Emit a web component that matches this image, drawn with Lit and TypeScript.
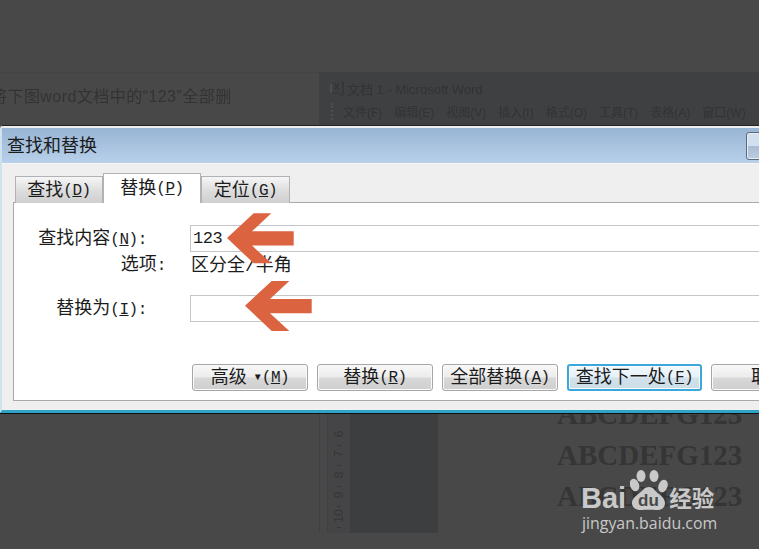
import { LitElement, html, css, svg } from 'lit';
import { customElement } from 'lit/decorators.js';

const MENUS = ['文件(F)', '编辑(E)', '视图(V)', '插入(I)', '格式(O)', '工具(T)', '表格(A)', '窗口(W)'];
const RULER = ['6', '7', '8', '9', '10'];

@customElement('word-backdrop')
export class WordBackdrop extends LitElement {
  static styles = css`
    :host {
      display: flex;
      height: 461px;
      padding-top: 72px;
      font-family: 'Liberation Sans', 'Noto Sans CJK SC', sans-serif;
      color: #333;
    }
    .lead {
      width: 319px;
      flex: none;
      overflow: hidden;
      border-top: 1px solid #444;
      box-sizing: border-box;
      height: 40px;
    }
    .lead p {
      margin: 13px 0 0 -9px;
      font-size: 16px;
      line-height: 22px;
      letter-spacing: 0.45px;
      white-space: nowrap;
      filter: blur(0.4px);
    }
    .word {
      flex: 1;
      display: flex;
      flex-direction: column;
      border-left: 1px solid #404040;
    }
    .head {
      height: 53px;
      background: #3e4042;
      flex: none;
      filter: blur(0.4px);
    }
    .title {
      display: flex;
      align-items: center;
      padding: 7px 0 0 10px;
      font-size: 13px;
      height: 18px;
    }
    .title svg {
      width: 14px;
      height: 16px;
      margin-right: 3px;
    }
    .menu {
      display: flex;
      gap: 12px;
      margin: 6px 0 0 11px;
      padding-left: 10px;
      border-left: 2px dotted #4c4e50;
      font-size: 12px;
      white-space: nowrap;
    }
    .work {
      flex: 1;
      display: flex;
    }
    .gutter {
      width: 7px;
      border-right: 1px solid #404040;
    }
    .ruler {
      width: 22px;
      background: #454547;
      display: flex;
      flex-direction: column;
      justify-content: flex-end;
      align-items: center;
      padding-bottom: 3px;
      font-size: 12px;
      color: #363636;
      filter: blur(0.4px);
    }
    .cell {
      height: 20.5px;
      display: flex;
      flex-direction: column;
      align-items: center;
    }
    .cell span {
      height: 12px;
      line-height: 12px;
      transform: rotate(-90deg);
    }
    .cell i {
      width: 4px;
      height: 1px;
      margin-top: 5px;
      background: #363636;
    }
    .pane {
      width: 88px;
      background: #3d3e40;
    }
    .page {
      flex: 1;
      display: flex;
      flex-direction: column;
      justify-content: flex-end;
      padding: 0 0 16px 119px;
      font: bold 29px/41px 'Liberation Serif', serif;
      color: #353535;
      white-space: nowrap;
    }
  `;

  render() {
    return html`
      <div class="lead"><p>将下图word文档中的“123”全部删</p></div>
      <div class="word">
        <div class="head">
          <div class="title">
            <svg viewBox="0 0 14 16" fill="none" stroke="#555a60" stroke-width="1.2">
              <path d="M1 13h9M11 2h2v13h-3M4 3l5 7M9 3l-5 7" stroke="#333"></path>
              <path d="M1 4v9"></path>
            </svg>
            <span>文档 1 - Microsoft Word</span>
          </div>
          <div class="menu">${MENUS.map((m) => html`<span>${m}</span>`)}</div>
        </div>
        <div class="work">
          <div class="gutter"></div>
          <div class="ruler">${RULER.map((n) => html`<div class="cell"><span>${n}</span><i></i></div>`)}</div>
          <div class="pane"></div>
          <div class="page">
            <div>ABCDEFG123</div>
            <div>ABCDEFG123</div>
            <div>ABCDEFG123</div>
          </div>
        </div>
      </div>
    `;
  }
}

@customElement('find-dialog')
export class FindDialog extends LitElement {
  static styles = css`
    :host {
      display: block;
      width: 800px;
      box-sizing: border-box;
      background: #efefef;
      border-top: 1px solid #222;
      border-left: 2px solid #cfe3ef;
      border-bottom: 3px solid #2fa3c8;
      border-top-left-radius: 4px;
      box-shadow: 0 1px #111;
      font-family: 'Liberation Mono', 'Noto Sans CJK SC', monospace;
      color: #1c1c1c;
      font-size: 18px;
      line-height: 20px;
    }
    .lat {
      font-size: 16px;
      letter-spacing: -0.4px;
    }
    .caption {
      margin-top: 2px;
      background: linear-gradient(#98b5d4, #b8d0ea);
      border-bottom: 1px solid #f6f6f6;
      display: flex;
      align-items: center;
      padding: 3px 0 0 5px;
      height: 32px;
      font-size: 18px;
      position: relative;
    }
    .close {
      position: absolute;
      left: 744px;
      top: 4px;
      width: 40px;
      height: 26px;
      border: 1px solid #5c6a7c;
      border-radius: 3px;
      box-shadow: inset 0 0 0 1px #e4edf6;
      background: linear-gradient(#d2dfee 0 48%, #a9bcd3 52%, #bccde2);
    }
    .tabs {
      display: flex;
      align-items: flex-end;
      padding: 9px 0 0 13px;
      margin-bottom: -1px;
    }
    .tab {
      height: 27px;
      box-sizing: border-box;
      display: flex;
      align-items: center;
      justify-content: center;
      padding-top: 1px;
      white-space: nowrap;
      border: 1.5px solid #b2b2b6;
      border-bottom: none;
      background: linear-gradient(#f6f6f6, #dcdcdc 55%, #cfcfcf);
    }
    .tab.wide {
      width: 88px;
    }
    .tab.narrow {
      width: 89px;
    }
    .tab.active {
      width: 98px;
      height: 30px;
      padding: 0;
      background: #fff;
      position: relative;
      z-index: 1;
    }
    .panel {
      margin: 0 0 0 11px;
      background: #fff;
      border: 1.5px solid #a9a9ad;
      border-right: none;
      padding: 22px 0 9px;
    }
    .row {
      display: grid;
      grid-template-columns: 176px 1fr;
      align-items: center;
    }
    .label {
      text-align: right;
      padding: 1px 43px 0 0;
      white-space: nowrap;
    }
    .options {
      height: 22px;
      margin-bottom: 21px;
    }
    .options .label {
      padding: 3px 24px 0 0;
    }
    .options .value {
      padding: 3px 0 0 1px;
    }
    .field {
      height: 27px;
      box-sizing: border-box;
      border: 1.5px solid #c6c6ca;
      padding-left: 2px;
      display: flex;
      align-items: center;
      font-size: 17px;
      letter-spacing: -0.5px;
    }
    .buttons {
      display: flex;
      gap: 9px;
      margin: 42px 0 0 178px;
    }
    .btn {
      width: 116px;
      height: 27px;
      flex: none;
      box-sizing: border-box;
      padding-top: 1px;
      border: 1.5px solid #a6a6a6;
      border-radius: 3px;
      background: linear-gradient(#f8f8f8, #ececec 48%, #d8d8d8 52%, #cfcfcf);
      box-shadow: inset 0 0 0 1px #fafafa;
      display: flex;
      align-items: center;
      justify-content: center;
      white-space: nowrap;
    }
    .btn.main {
      width: 135px;
      border: 2px solid #3aa8dc;
      background: linear-gradient(#f2f9fd, #e6f1f8 48%, #d2e2ec 52%, #cbdde8);
    }
    .tri {
      font-size: 10px;
      margin: 0 1px 0 8px;
    }
    .foot {
      height: 9px;
    }
  `;

  private latin(open: string, key: string, close = ')') {
    return html`<span class="lat">${open}<u>${key}</u>${close}</span>`;
  }

  render() {
    return html`
      <div class="caption">查找和替换<span class="close"></span></div>
      <div class="tabs">
        <div class="tab wide">查找${this.latin('(', 'D')}</div>
        <div class="tab active">替换${this.latin('(', 'P')}</div>
        <div class="tab narrow">定位${this.latin('(', 'G')}</div>
      </div>
      <div class="panel">
        <div class="row">
          <div class="label">查找内容${this.latin('(', 'N', '):')}</div>
          <div class="field">123</div>
        </div>
        <div class="row options">
          <div class="label">选项<span class="lat">:</span></div>
          <div class="value">区分全/半角</div>
        </div>
        <div class="row">
          <div class="label">替换为${this.latin('(', 'I', '):')}</div>
          <div class="field"></div>
        </div>
        <div class="buttons">
          <div class="btn">高级<span class="tri">▼</span>${this.latin('(', 'M')}</div>
          <div class="btn">替换${this.latin('(', 'R')}</div>
          <div class="btn">全部替换${this.latin('(', 'A')}</div>
          <div class="btn main">查找下一处${this.latin('(', 'F')}</div>
          <div class="btn">取消</div>
        </div>
      </div>
      <div class="foot"></div>
    `;
  }
}

@customElement('app-root')
export class AppRoot extends LitElement {
  static styles = css`
    :host {
      display: block;
      position: relative;
      width: 759px;
      height: 549px;
      overflow: hidden;
      background: #484848;
    }
    find-dialog {
      position: absolute;
      left: 0;
      top: 125px;
    }
    .arrows {
      position: absolute;
      left: 0;
      top: 0;
      pointer-events: none;
    }
    .mark {
      position: absolute;
      left: 581px;
      top: 470px;
      width: 140px;
      color: #c9c9c9;
    }
    .brand {
      display: flex;
      align-items: flex-end;
      height: 42px;
      font: bold 29px/28px 'Liberation Sans', sans-serif;
    }
    .brand svg {
      width: 38px;
      height: 42px;
      margin: 0 1px 0 4px;
      flex: none;
    }
    .brand .cn {
      font: bold 22.5px/30px 'Noto Sans CJK SC', sans-serif;
      white-space: nowrap;
    }
    .site {
      font: 15.9px/20px 'Open Sans', sans-serif;
      white-space: nowrap;
      margin: 1px 0 0 1px;
    }
  `;

  private arrow(dx: number, dy: number) {
    const pts = [
      [245, 305.7], [271.7, 281], [289.3, 281], [270, 299], [311.7, 299],
      [311.7, 313.3], [270, 313.3], [289.3, 331], [271.7, 331],
    ];
    return svg`<polygon fill="#dc6340" points=${pts.map(([x, y]) => `${x + dx},${y + dy}`).join(' ')}></polygon>`;
  }

  render() {
    return html`
      <word-backdrop></word-backdrop>
      <find-dialog></find-dialog>
      <svg class="arrows" width="759" height="549" viewBox="0 0 759 549">
        ${this.arrow(-18, -67.7)}${this.arrow(0, 0)}
      </svg>
      <div class="mark">
        <div class="brand">
          <span>Bai</span>
          <svg viewBox="0 0 38 42" fill="#c9c9c9">
            <ellipse cx="4.5" cy="15" rx="4.5" ry="6.5" transform="rotate(-20 4.5 15)"></ellipse>
            <ellipse cx="11" cy="6" rx="4.5" ry="6"></ellipse>
            <ellipse cx="24" cy="6" rx="4.5" ry="6"></ellipse>
            <ellipse cx="33" cy="16" rx="4.5" ry="6.5" transform="rotate(20 33 16)"></ellipse>
            <path d="M19 17c4 0 5.500 3 8 5.500 4 3 8 6 8 10.500 0 5-4 7.500-9 7-4-.5-9-.5-14 0-5 .5-10-2-10-7 0-4 3-6.500 7-9.500 4-3 5-6.500 10-6.500z"></path>
            <text x="18.500" y="36" text-anchor="middle" font-family="Liberation Sans" font-weight="700" font-size="17" fill="#484848">du</text>
          </svg>
          <span class="cn">经验</span>
        </div>
        <div class="site">jingyan.baidu.com</div>
      </div>
    `;
  }
}
